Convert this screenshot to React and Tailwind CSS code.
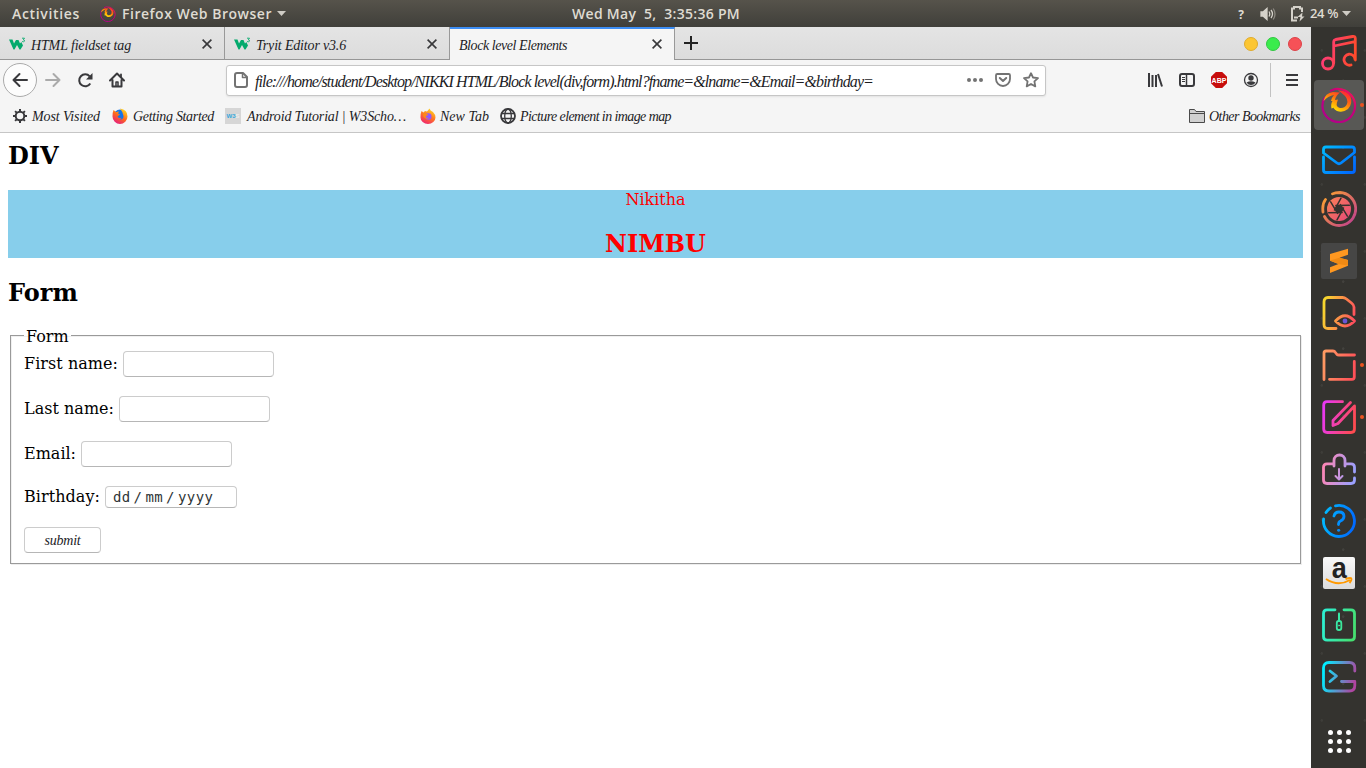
import { useLayoutEffect, useRef, useState } from "react";

// A single line of text whose letter spacing is set so that it fills `width` pixels.
function Fit({ width, className = "", children }) {
  const ref = useRef(null);
  const [spacing, setSpacing] = useState(0);
  useLayoutEffect(() => {
    const natural = ref.current.getBoundingClientRect().width;
    setSpacing((s) => s + (width - natural) / children.length);
  }, [width, children]);
  return (
    <span ref={ref} style={{ letterSpacing: spacing }} className={`inline-block shrink-0 whitespace-pre ${className}`}>
      {children}
    </span>
  );
}

const script = "font-['Liberation_Serif',serif] italic text-[#1c1c1f]";

function Flame({ size, id }) {
  return (
    <svg width={size} height={size} viewBox="0 0 36 36" fill="none">
      <defs>
        <linearGradient id={id} x1="1" y1="0" x2="0" y2="1">
          <stop offset="0" stopColor="#ff1a50" />
          <stop offset=".35" stopColor="#c4007a" />
          <stop offset="1" stopColor="#b0008e" />
        </linearGradient>
        <linearGradient id={`${id}f`} gradientUnits="userSpaceOnUse" x1="25" y1="3" x2="14" y2="24">
          <stop offset="0" stopColor="#ff1540" />
          <stop offset=".45" stopColor="#ff6a10" />
          <stop offset="1" stopColor="#ffe600" />
        </linearGradient>
      </defs>
      <path d="M4 10A16.300 16.300 0 1 0 30 8Q24 1 14 2L9 4" stroke={`url(#${id})`} strokeWidth="2.200" />
      <path d="M2.500 14Q4 6 12 5L19 5.500Q15 8 14 13L17 12.500 14.500 20 10.500 21.500Q9.500 17 11.500 14L10 14Q11 10 13 8 7 9 2.500 14z" fill={`url(#${id}f)`} />
      <path d="M17 3.500Q26 3 29.500 9.500 32 17 27 22 22 26 16 24 11.500 22 12 17L15.500 16Q15 20 19 21 24 21.500 26 17 27.500 12 23 8 20 5 17 3.500z" fill={`url(#${id}f)`} />
    </svg>
  );
}

function TopBar() {
  return (
    <header className="flex h-[27px] shrink-0 items-center bg-linear-to-b from-[#56534b] to-[#403f3a] font-['Open_Sans','Noto_Sans',sans-serif] text-[14px] font-semibold leading-none text-[#dfdbd2]">
      <div className="flex w-[572px] items-center pl-3">
        <Fit width={68}>Activities</Fit>
        <div className="ml-[20px] mr-[6px]"><Flame size={16} id="top" /></div>
        <Fit width={150}>Firefox Web Browser</Fit>
        <svg className="ml-[5px]" width="9" height="5"><path d="M0 0h9L4.500 5z" fill="#cfccc5" /></svg>
      </div>
      <Fit width={168}>{"Wed May  5,  3:35:36 PM"}</Fit>
      <div className="ml-auto flex items-center pr-[15px]">
        <span className="mr-[16px] mt-[2px] text-[12px] font-bold">?</span>
        <svg className="mr-[14px]" width="16" height="14" viewBox="0 0 16 14" fill="none" stroke="#d5d2ca" strokeWidth="1.300">
          <path d="M1 5h2l4-3.500v11L3 9H1z" fill="#d5d2ca" />
          <path d="M9 4.500q1.500 2.500 0 5M11 3q3 4 0 8" />
          <path d="M13.200 1.500q3.600 5.500 0 11" stroke="#8b8880" />
        </svg>
        <svg className="mr-[5px]" width="15" height="17" viewBox="0 0 15 17" fill="none">
          <path d="M7 15.500H2V3.500h2V2h6v1.500h2V7" stroke="#d5d2ca" strokeWidth="2" />
          <path d="M4 11.500h4v2H4zM12.500 7.500 7.500 12h3l-1 4.500L14.500 11.500H12z" fill="#d5d2ca" />
        </svg>
        <Fit width={28} className="text-[13px]">24 %</Fit>
        <svg className="ml-[4px]" width="9" height="5"><path d="M0 0h9L4.500 5z" fill="#cfccc5" /></svg>
      </div>
    </header>
  );
}

function Close() {
  return (
    <svg width="10" height="10" viewBox="0 0 10 10" stroke="#38383a" strokeWidth="1.600"><path d="M.6.6l8.800 8.800M9.400.6.6 9.400" /></svg>
  );
}

function W3() {
  return (
    <svg width="17" height="14" viewBox="0 0 17 14" fill="none">
      <path d="M0 2.500h3.500l1.500 4L7 3h2.500l1.500 3.500 1.300-1.500L14 8.500l-2.500 4h-1L8 8l-2.500 4.500h-1z" fill="#04aa6d" />
      <path d="M13 1.200h2.500l-1.200 1.600q1.500.1 1.200 1.400-.8 1-2.400.3" stroke="#04aa6d" strokeWidth=".9" />
    </svg>
  );
}

function TabBar() {
  const strip = "bg-linear-to-b from-[#e4e4e4] to-[#dcdcdc] border-b border-b-[#969696]";
  const label = `${script} mt-[3px] text-[14px] leading-none`;
  return (
    <div className="flex h-[33px] shrink-0">
      <div className={`flex w-[225px] items-center border-r border-r-[#999] pl-[9px] pr-[12px] pt-[2px] ${strip}`}>
        <W3 />
        <Fit width={100} className={`ml-[5px] ${label}`}>HTML fieldset tag</Fit>
        <div className="ml-auto"><Close /></div>
      </div>
      <div className={`flex w-[225px] items-center border-r border-r-[#999] pl-[9px] pr-[12px] pt-[2px] ${strip}`}>
        <W3 />
        <Fit width={90} className={`ml-[5px] ${label}`}>Tryit Editor v3.6</Fit>
        <div className="ml-auto"><Close /></div>
      </div>
      <div className="flex w-[225px] items-center border-r border-t-2 border-r-[#999] border-t-[#3d8ef5] bg-[#f5f5f5] pb-px pl-[9px] pr-[12px]">
        <Fit width={108} className={label}>Block level Elements</Fit>
        <div className="ml-auto"><Close /></div>
      </div>
      <div className={`flex flex-1 items-center gap-2 pl-[9px] pr-[9px] pt-[2px] ${strip}`}>
        <svg className="-mt-[2px]" width="14" height="14" viewBox="0 0 14 14" stroke="#222" strokeWidth="2"><path d="M7 0v14M0 7h14" /></svg>
        <i className="ml-auto size-[14px] rounded-full border border-[#dfab2c] bg-[#fcc633]" />
        <i className="size-[14px] rounded-full border border-[#32c742] bg-[#3aec4c]" />
        <i className="size-[14px] rounded-full border border-[#dc4248] bg-[#f65157]" />
      </div>
    </div>
  );
}

function Toolbar() {
  return (
    <div className="flex h-[40px] shrink-0 items-center bg-[#f5f5f5] pl-[3px] text-[#39393c]">
      <div className="flex size-[34px] items-center justify-center rounded-full border border-[#aaa] bg-[#fcfcfc]">
        <svg width="16" height="16" viewBox="0 0 16 16" fill="none" stroke="currentColor" strokeWidth="2" strokeLinecap="round" strokeLinejoin="round"><path d="M15 8H1.500M7.500 2l-6 6 6 6" /></svg>
      </div>
      <svg className="ml-[8px]" width="16" height="16" viewBox="0 0 16 16" fill="none" stroke="#aaa" strokeWidth="2" strokeLinecap="round" strokeLinejoin="round"><path d="M1 8h13.500M8.500 2l6 6-6 6" /></svg>
      <svg className="ml-[16px]" width="16" height="16" viewBox="0 0 16 16" fill="none" stroke="currentColor" strokeWidth="2"><path d="M13.300 11.500a6 6 0 1 1-.6-7.200" /><path d="M15.500 1v6.500H9z" fill="currentColor" stroke="none" /></svg>
      <svg className="ml-[16px]" width="16" height="16" viewBox="0 0 16 16" fill="none" stroke="currentColor" strokeWidth="2" strokeLinejoin="round" strokeLinecap="round"><path d="M1 8.500 8 1.500l7 7M3.500 8v6.500h9V8" /><path d="M7 14v-4h2v4" strokeWidth="1.500" /><path d="M12 2.500v2" strokeWidth="1.800" /></svg>
      <div className="ml-[101px] flex h-[31px] w-[820px] items-center rounded-[3px] border border-[#c6c6c6] bg-white pl-[7px] pr-[6px] shadow-[0_1px_2px_rgba(0,0,0,.08)]">
        <svg width="14" height="16" viewBox="0 0 14 16" fill="none" stroke="#737373" strokeWidth="2" strokeLinejoin="round"><path d="M3 1h6l4 4v8q0 2-2 2H3q-2 0-2-2V3q0-2 2-2z" /><path d="M8.500 1v4.500H13" strokeWidth="1.500" /></svg>
        <Fit width={618} className={`${script} ml-[7px] mt-[3px] text-[16px] leading-none`}>file:///home/student/Desktop/NIKKI HTML/Block level(div,form).html?fname=&lname=&Email=&birthday=</Fit>
        <div className="ml-auto flex items-center gap-[12px] text-[#737373]">
          <svg width="16" height="4" fill="currentColor"><circle cx="2" cy="2" r="2" /><circle cx="8" cy="2" r="2" /><circle cx="14" cy="2" r="2" /></svg>
          <svg width="16" height="14" viewBox="0 0 16 14" fill="none" stroke="currentColor" strokeWidth="1.800" strokeLinecap="round" strokeLinejoin="round"><path d="M2.300 1h11.400q1.300 0 1.300 1.300V6a7 7 0 0 1-14 0V2.300Q1 1 2.300 1z" /><path d="m4.800 5 3.200 3 3.200-3" strokeWidth="2" /></svg>
          <svg width="16" height="16" viewBox="0 0 16 16" fill="none" stroke="currentColor" strokeWidth="1.800" strokeLinejoin="round"><path d="m8 1.200 2 4.300 5 .6-3.600 3.300.9 5L8 12l-4.300 2.400.9-5L1 6.100l5-.6z" /></svg>
        </div>
      </div>
      <svg className="ml-[101px]" width="16" height="14" viewBox="0 0 16 14" stroke="currentColor" strokeWidth="2"><path d="M2 0v14M5.500 2v12M9 2v12M11 1l4 12.500" /></svg>
      <svg className="ml-[16px]" width="16" height="14" viewBox="0 0 16 14" fill="none" stroke="currentColor"><rect x="1" y="1" width="14" height="12" rx="2" strokeWidth="2" /><path d="M7.500 1v12" strokeWidth="1.500" /><path d="M3 4.500h3M3 6.500h3M3 8.500h3" /></svg>
      <div className="ml-[16px] flex size-4 items-center justify-center bg-[#c70d0c] font-['Liberation_Sans',sans-serif] text-[7px] font-bold leading-none text-white [clip-path:polygon(30%_0,70%_0,100%_30%,100%_70%,70%_100%,30%_100%,0_70%,0_30%)]">ABP</div>
      <svg className="ml-[16px]" width="16" height="16" viewBox="0 0 16 16" fill="none"><circle cx="8" cy="8" r="6.500" stroke="currentColor" strokeWidth="1.300" /><circle cx="8" cy="6" r="2.700" fill="currentColor" /><path d="M3.500 10.500Q8 8 12.500 10.500 11 13 8 13t-4.500-2.500z" fill="currentColor" /></svg>
      <div className="ml-[11px] h-[34px] w-px bg-[#c2c2c2]" />
      <svg className="ml-[15px]" width="12" height="12" viewBox="0 0 12 12" fill="currentColor"><path d="M0 0h12v2H0zM0 5h12v2H0zM0 10h12v2H0z" /></svg>
    </div>
  );
}

function Bookmarks() {
  const label = `${script} mt-[2px] text-[14px] leading-none`;
  return (
    <div className="flex h-[33px] shrink-0 items-center border-b border-[#c6c6c6] bg-[#f5f5f5] pl-[12px] pr-[11px]">
      <svg width="16" height="16" viewBox="0 0 16 16" fill="none" stroke="#39393c"><circle cx="8" cy="8" r="4.300" strokeWidth="2" /><path d="M8 1v3M8 12v3M1 8h3M12 8h3M3.100 3.100l2 2M10.900 10.900l2 2M3.100 12.900l2-2M10.900 5.100l2-2" strokeWidth="2" /></svg>
      <Fit width={68} className={`ml-[4px] mr-px ${label}`}>Most Visited</Fit>
      <svg className="ml-[11px]" width="16" height="16" viewBox="0 0 16 16">
        <defs><linearGradient id="old" x1=".8" y1="0" x2=".2" y2="1"><stop offset="0" stopColor="#ffe226" /><stop offset=".5" stopColor="#ff6b1a" /><stop offset="1" stopColor="#e31587" /></linearGradient></defs>
        <circle cx="8" cy="8" r="6.500" fill="#1474e8" />
        <path d="M1.500 2 4 4l3-.5-1 2 2 1-2.500 2Q7 11 9.500 9.500 9 12 6.500 11q5 1.500 5-3Q11 4 8 .5q7.500 1 7.500 8a7.300 7.300 0 0 1-15 0Q.3 5 1.500 2z" fill="url(#old)" />
      </svg>
      <Fit width={81} className={`ml-[5px] ${label}`}>Getting Started</Fit>
      <div className="ml-[11px] flex size-4 items-center justify-center bg-[#d6d6d6] font-['Liberation_Sans',sans-serif] text-[6px] font-bold leading-none text-[#35a8dc]">W3<span className="text-[#eee]">S</span></div>
      <Fit width={159} className={`ml-[6px] ${label}`}>Android Tutorial | W3Scho…</Fit>
      <svg className="ml-[14px]" width="16" height="16" viewBox="0 0 16 16">
        <defs><linearGradient id="new" x1=".8" y1="0" x2=".3" y2="1"><stop offset="0" stopColor="#ffe226" /><stop offset=".5" stopColor="#ff7a22" /><stop offset="1" stopColor="#f0246d" /></linearGradient></defs>
        <path d="M1.500 3 3.500 4.500 5 3l2 .5L9.500.5q.5 2 3.500 3.500 2.500 2.500 2.500 5.500a7.400 6.300 0 0 1-15 0Q.3 6 1.500 3z" fill="url(#new)" />
        <circle cx="8.300" cy="8.500" r="3.200" fill="#9059ff" />
        <path d="M3 5.500q4-.5 5.500 1.500l-3 1q1 3 4 2-3 2-6-1z" fill="#ff8a16" />
      </svg>
      <Fit width={49} className={`ml-[4px] ${label}`}>New Tab</Fit>
      <svg className="ml-[11px]" width="16" height="16" viewBox="0 0 16 16" fill="none" stroke="#39393c" strokeWidth="1.300"><circle cx="8" cy="8" r="7" strokeWidth="1.800" /><ellipse cx="8" cy="8" rx="3.300" ry="7" /><path d="M1.500 5.500h13M1.500 10.500h13" /></svg>
      <Fit width={151} className={`ml-[4px] ${label}`}>Picture element in image map</Fit>
      <svg className="ml-auto" width="16" height="14" viewBox="0 0 16 14" fill="#d0d0d0" stroke="#4a4a4a"><path d="M.5 13.500V.5h5l1.500 2h8.500v11zM.5 4.500h15" /></svg>
      <Fit width={91} className={`ml-[4px] ${label}`}>Other Bookmarks</Fit>
    </div>
  );
}

const field = "rounded-[4px] border border-[#ccc] border-b-[#b6b6b6] bg-white";

function Page() {
  return (
    <main className="flex-1 bg-white px-2 pt-[9px] font-['DejaVu_Serif',serif] text-[16px] leading-[19px] text-black">
      <h2 className="text-[24px] font-bold leading-[28px]">DIV</h2>
      <div className="mt-[20px] h-[68px] bg-[#87ceeb] text-center text-[#f00]">
        <div>Nikitha</div>
        <h2 className="mt-[21px] text-[24px] font-bold leading-[28px]">NIMBU</h2>
      </div>
      <h2 className="mt-[21px] text-[24px] font-bold leading-[28px]">Form</h2>
      <fieldset className="mx-[2px] mt-[20px] h-[237px] border border-[#9a9a9a] px-[13px] shadow-[inset_1px_1px_0_#f0f0f0,1px_1px_0_#ededed]">
        <legend className="h-[17px] px-[2px] leading-[19px]">Form</legend>
        <div className="mt-[7px] flex h-[26px] items-center gap-[5px]">
          <Fit width={94} className="-mt-px">First name:</Fit>
          <input className={`h-[26px] w-[151px] ${field}`} />
        </div>
        <div className="mt-[19px] flex h-[26px] items-center gap-[5px]">
          <Fit width={90} className="-mt-px">Last name:</Fit>
          <input className={`h-[26px] w-[151px] ${field}`} />
        </div>
        <div className="mt-[19px] flex h-[26px] items-center gap-[5px]">
          <Fit width={52} className="-mt-px">Email:</Fit>
          <input className={`h-[26px] w-[151px] ${field}`} />
        </div>
        <div className="mt-[19px] flex h-[22px] items-center gap-[5px]">
          <Fit width={76} className="-mt-px">Birthday:</Fit>
          <div className={`flex h-[22px] w-[132px] items-center pl-[7px] font-['DejaVu_Sans_Mono',monospace] text-[14px] leading-none text-[#2e3436] ${field}`}>
            <Fit width={17.5}>dd</Fit>
            <span className="ml-[3px] w-[12px]">/</span>
            <Fit width={17.5}>mm</Fit>
            <span className="ml-[3px] w-[12px]">/</span>
            <Fit width={35.5}>yyyy</Fit>
          </div>
        </div>
        <button className={`mt-[19px] flex h-[26px] w-[77px] items-center justify-center text-[14px] leading-none ${field}`}>
          <Fit width={36} className={`mt-[2px] ${script}`}>submit</Fit>
        </button>
      </fieldset>
    </main>
  );
}

const gradients = [
  ["music", "#ff3b78", "#ff4b2b"],
  ["mail", "#00c0ff", "#0066ff"],
  ["shut", "#ffa32e", "#c0408e"],
  ["blade", "#ff8a50", "#e0407e"],
  ["doc", "#f7d72e", "#ff4d5e"],
  ["fold", "#ff9a62", "#ff5058"],
  ["edit", "#e838f0", "#ff4b50"],
  ["soft", "#ff86b4", "#9aa0ff"],
  ["help", "#00baff", "#0068ff"],
  ["zip", "#2df0d0", "#46e070"],
  ["term", "#00eeff", "#b044a0"],
];
const diagonal = ["shut", "mail", "blade"];

function Icon({ g, children }) {
  return (
    <svg width="36" height="36" viewBox="0 0 36 36" fill="none" stroke={g ? `url(#g-${g})` : "none"} strokeWidth="2.800" strokeLinecap="round" strokeLinejoin="round">
      {children}
    </svg>
  );
}

const apps = [
  { icon: <Icon g="music"><circle cx="7" cy="28.500" r="5.500" /><path d="M12.700 28V7q0-2 2-2.500L31.500 1.500q2.800-.5 2.800 2V25M13 11l21-4.300M34 24.500a5.500 5.500 0 1 0-4 5.500" /></Icon> },
  { icon: <Flame size={36} id="dock" />, active: true, running: true },
  { icon: <Icon g="mail"><path d="M2.500 18v13q0 2.500 2.500 2.500h26q2.500 0 2.500-2.500V18M2.500 13v-2.500q0-2.500 2.500-2.500h26q2.500 0 2.500 2.500v3L20 24q-2 1.500-4 0L2.500 14z" /></Icon> },
  { icon: <Icon g="shut"><path d="M11.500 2.900Q14 1.500 19 1.500a16.500 16.500 0 1 1-15.500 24M2 21Q1 13 4.500 8.500" /><circle cx="18" cy="18" r="12" fill="url(#g-blade)" stroke="none" /><path d="M22 18l-2 3.460h-4l-2-3.460 2-3.460h4z" fill="#34332f" stroke="none" />{[0, 60, 120, 180, 240, 300].map((a) => <path key={a} d="M22.500 17 16 28.800" transform={`rotate(${a} 18 18)`} stroke="#34332f" strokeWidth="1.500" />)}</Icon> },
  { icon: <Icon><rect width="36" height="36" rx="2" fill="#464645" /><path d="M9 11 27 5.700v6L18.500 14.700 27 17v5.700L9 30v-5.700L17.500 21 9 17.700z" fill="#ff9820" /><path d="m9 17.500 9.500-2.800L27 17v5.500L17.500 21z" fill="#f08a14" /></Icon> },
  { icon: <Icon g="doc"><path d="M15 33.500H7q-4 0-4-4V7q0-4.500 4-4.500h14.500q2 0 4 1.500l5 4q2.500 2 2.500 4V19.500M14.500 26q9.500-10.500 19 0-9.500 10-19 0z" /><circle cx="24" cy="26" r="2.400" fill="#6a55d8" stroke="none" /></Icon> },
  { icon: <Icon g="fold"><path d="M3 32.500V6q0-2 2-2h7q1.500 0 2 1l2 2.500q.5.500 2 .5h15.500M33.300 14.500V30q0 2.300-2.300 2.300H8.500" /></Icon>, running: true },
  { icon: <Icon g="edit"><path d="M21.500 2.700H6Q2.700 2.700 2.700 6v24q0 3.500 3.500 3.500H30q3.500 0 3.500-3.500V7L17 24.500l-5 2v-5L29.500 3.500" /></Icon>, running: true },
  { icon: <Icon g="soft"><path d="M24 15V9.500a5.500 5.500 0 0 0-11 0V15M12 12.800H6q-3.500 0-3.500 3.500V29q0 3.500 3.500 3.500h24q3.500 0 3.500-3.500v-2M25 12.800h5q3.500 0 3.500 3.500V21" /><path d="M18 18v10M14.500 25l3.500 3.500 3.500-3.500" strokeWidth="2" /></Icon> },
  { icon: <Icon g="help"><path d="M14.500 2.900A15.500 15.500 0 1 1 2.600 16M5 9.500q2-3 4.500-4.500M13 13q1-4 5-4 5 0 5 4.300Q23 16.500 19.500 18q-2 .8-2 3.500" /><path d="M17.500 27.300h.3" /></Icon> },
  { amazon: true },
  { icon: <Icon g="zip"><path d="M14 2.800H6Q2.500 2.800 2.500 6.500v23q0 3.700 3.700 3.700H30q3.500 0 3.500-3.700v-23Q33.500 2.800 30 2.800h-7" /><path d="M18 6.500V14" strokeWidth="2" /><rect x="15.800" y="14" width="4.500" height="9" rx="2" strokeWidth="1.800" /><circle cx="18" cy="18.500" r=".6" strokeWidth="1" /></Icon> },
  { icon: <Icon g="term"><path d="M33.800 12V9q0-5.500-5.500-5.500H8Q2.500 3.500 2.500 9v17.500Q2.500 32 8 32h20.300q5.500 0 5.500-5.500V22.500H20.500M9 12l6.500 5L9 22.500" /></Icon> },
];

function Amazon() {
  return (
    <div className="flex size-9 items-center justify-center">
      <div className="relative flex size-[32px] justify-center rounded-[2px] bg-linear-to-b from-[#f8f8f8] to-[#dcdcdc] font-['Liberation_Sans',sans-serif] text-[30px] font-bold leading-[21px] text-[#222]">
        <span className="scale-x-90">a</span>
        <svg className="absolute bottom-[3px] left-[2px]" width="28" height="9" viewBox="0 0 28 9" fill="none" stroke="#ff9900" strokeWidth="1.900"><path d="M1 2q12 8 24 1M20.500 2q6-2 6 0 0 2-2 4" /></svg>
      </div>
    </div>
  );
}

function Dock() {
  return (
    <aside className="flex w-[55px] shrink-0 flex-col bg-[#34332f] bg-[radial-gradient(circle_at_25%_35%,#3e3d39_0_1px,transparent_1.500px),radial-gradient(circle_at_75%_80%,#42413d_0_1px,transparent_1.500px)] bg-[size:43px_67px]">
      <svg width="0" height="0" className="absolute">
        <defs>
          {gradients.map(([id, a, b]) => (
            <linearGradient key={id} id={`g-${id}`} gradientUnits="userSpaceOnUse" x1="2" y1={diagonal.includes(id) ? 4 : 14} x2="34" y2={diagonal.includes(id) ? 32 : 22}>
              <stop offset="0" stopColor={a} /><stop offset="1" stopColor={b} />
            </linearGradient>
          ))}
        </defs>
      </svg>
      {apps.map((app, i) => (
        <div key={i} className="flex h-[52px] shrink-0 items-center pl-[3px]">
          <div className={`flex size-[50px] items-center justify-center rounded-[4px] ${app.active ? "bg-[#585855]" : ""}`}>
            {app.amazon ? <Amazon /> : app.icon}
          </div>
          {app.running && <i className="-ml-[4px] size-[4px] rounded-full bg-[#e95420]" />}
        </div>
      ))}
      <div className="mt-[27px] grid w-[24px] grid-cols-3 gap-[4px] self-center pl-[1px]">
        {Array.from({ length: 9 }, (_, i) => <i key={i} className="size-[5px] rounded-full bg-white" />)}
      </div>
    </aside>
  );
}

export default function App() {
  return (
    <div className="flex h-[768px] w-[1366px] flex-col overflow-hidden">
      <TopBar />
      <div className="flex min-h-0 flex-1">
        <div className="flex w-[1311px] flex-col">
          <TabBar />
          <Toolbar />
          <Bookmarks />
          <Page />
        </div>
        <Dock />
      </div>
    </div>
  );
}
